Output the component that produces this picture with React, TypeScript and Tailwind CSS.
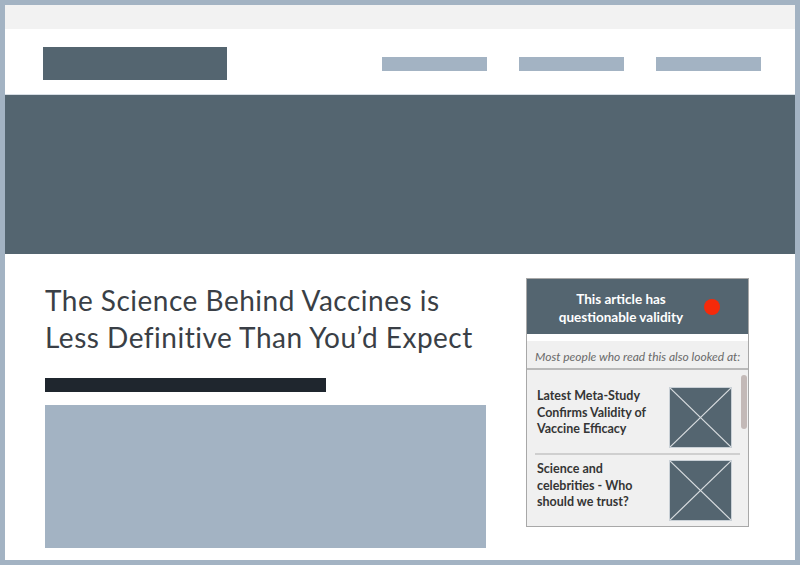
import React from 'react';

const THUMB = 'w-[63px] h-[61px] bg-[#546570] border border-[#c9d0d6] shrink-0';

const related = [
    { id: 1, lines: ['Latest Meta-Study', 'Confirms Validity of', 'Vaccine Efficacy'] },
    { id: 2, lines: ['Science and', 'celebrities - Who', 'should we trust?'] },
];

const Thumb = () => (
    <div className={THUMB}>
        <svg width="100%" height="100%" viewBox="0 0 61 59" preserveAspectRatio="none">
            <line x1="0" y1="0" x2="61" y2="59" stroke="#d9dde0" strokeWidth="1.2" />
            <line x1="61" y1="0" x2="0" y2="59" stroke="#d9dde0" strokeWidth="1.2" />
        </svg>
    </div>
);

export default function App() {
    return (
        <div className="w-[800px] h-[565px] bg-[#a3b3c3] p-[5px] overflow-hidden" style={{ fontFamily: 'Lato, "Open Sans", sans-serif' }}>
            <div className="h-full bg-white flex flex-col">
                <div className="h-[24px] bg-[#f2f2f2]" />

                {/* header */}
                <div className="h-[66px] flex items-start justify-between pl-[38px] pr-[34px] border-b border-[#d6dde4]">
                    <div className="mt-[18px] w-[184px] h-[33px] bg-[#546570]" />
                    <div className="mt-[28px] flex gap-[32px]">
                        <div className="w-[105px] h-[14px] bg-[#a3b3c3]" />
                        <div className="w-[105px] h-[14px] bg-[#a3b3c3]" />
                        <div className="w-[105px] h-[14px] bg-[#a3b3c3]" />
                    </div>
                </div>

                {/* hero */}
                <div className="h-[159px] bg-[#546570]" />

                <div className="flex flex-1">
                    {/* article */}
                    <div className="pl-[40px] pt-[28px] w-[481px]">
                        <h1 className="text-[28px] leading-[37px] text-[#3a3f46] font-normal tracking-[0.5px]">
                            The Science Behind Vaccines is
                            <br />
                            Less Definitive Than You’d Expect
                        </h1>
                        <div className="mt-[22px] w-[281px] h-[14px] bg-[#1f262e]" />
                        <div className="mt-[13px] w-[441px] h-[143px] bg-[#a3b3c3]" />
                    </div>

                    {/* sidebar */}
                    <div className="ml-[40px] mt-[24px] w-[223px] h-[249px] border border-[#a8a8a8] flex flex-col bg-[#f0f0f0]">
                        <div className="h-[55px] bg-[#546570] flex items-center">
                            <div className="ml-[22px] w-[144px] pt-[2px] text-center text-white font-bold text-[13.5px] leading-[18px]">
                                This article has
                                <br />
                                questionable validity
                            </div>
                            <div className="ml-[11px] w-4 h-4 rounded-full bg-[#f52a0a]" />
                        </div>
                        <div className="h-[7px] bg-white" />
                        <div className="h-[29px] border-b-2 border-[#b9b9b9] pl-[8px] pt-[9px] text-[12px] leading-[14px] italic text-[#6a6a6a] whitespace-nowrap">
                            Most people who read this also looked at:
                        </div>
                        <div className="relative flex-1 overflow-hidden">
                            <div className="absolute right-[1px] top-[5px] w-[6px] h-[54px] rounded-full bg-[#c3b9b7]" />
                            {related.map((item, i) => (
                                <div key={item.id}>
                                    {i > 0 && <div className="ml-[8px] w-[205px] h-[2px] bg-[#cfcfcf]" />}
                                    <div className={`flex items-start justify-between pl-[10px] pr-[16px] ${i === 0 ? 'pt-[17px] pb-[5px]' : 'pt-[5px]'}`}>
                                        <div className="pt-[1px] text-[12.5px] leading-[16.5px] font-bold text-[#353535]">
                                            {item.lines.map(l => (
                                                <div key={l}>{l}</div>
                                            ))}
                                        </div>
                                        <Thumb />
                                    </div>
                                </div>
                            ))}
                        </div>
                    </div>
                </div>
            </div>
        </div>
    );
}
